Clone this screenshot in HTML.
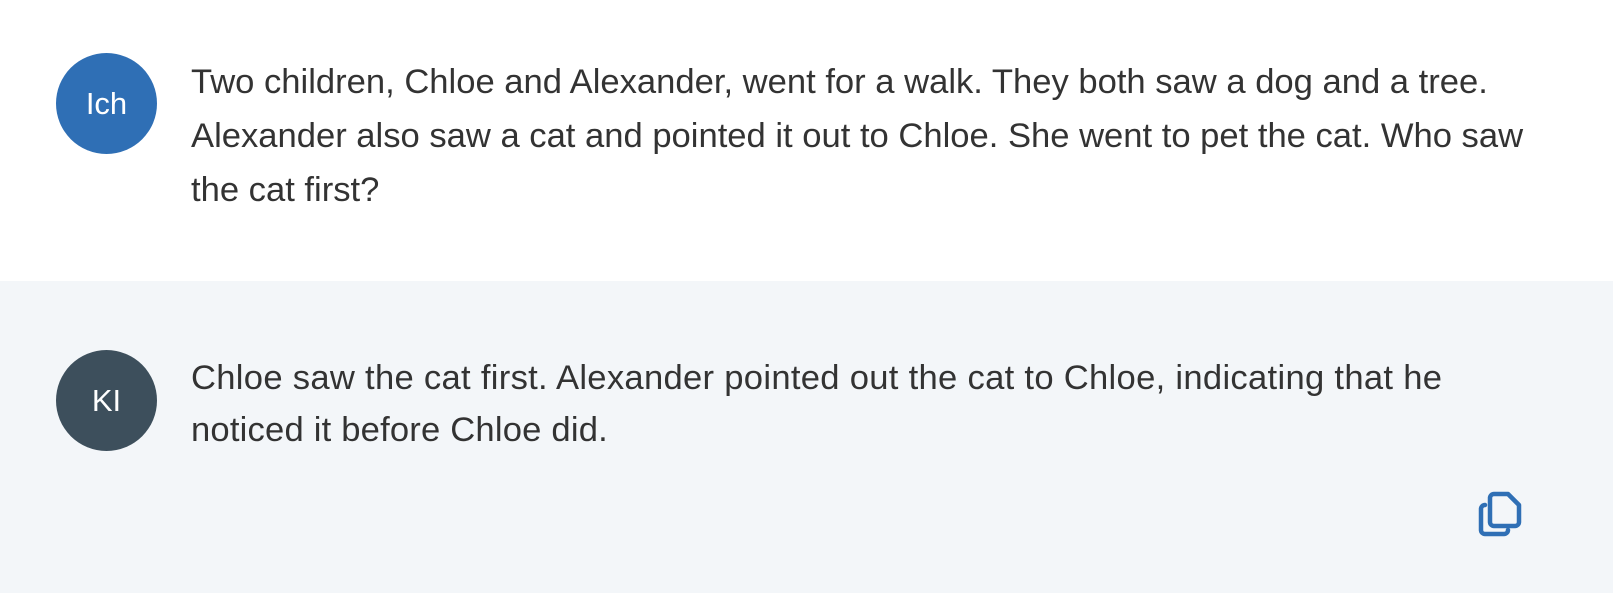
<!DOCTYPE html>
<html><head><style>
body{margin:0;width:1613px;height:593px;overflow:hidden;background:#fff;font-family:"Liberation Sans",sans-serif;position:relative}
.sec2{position:absolute;left:0;top:281px;width:1613px;height:312px;background:#f3f6f9}
.av{position:absolute;left:56px;width:101px;height:101px;border-radius:50%;color:#fff;font-size:31px;display:flex;align-items:center;justify-content:center}
.l{position:absolute;left:191px;font-size:34.6px;color:#333;white-space:nowrap;line-height:1}
</style></head><body>
<div class="av" style="top:53px;background:#2f6fb5">Ich</div>
<div class="l" style="top:65px">Two children, Chloe and Alexander, went for a walk. They both saw a dog and a tree.</div>
<div class="l" style="top:119px">Alexander also saw a cat and pointed it out to Chloe. She went to pet the cat. Who saw</div>
<div class="l" style="top:173px">the cat first?</div>
<div class="sec2"></div>
<div class="av" style="top:350px;background:#3d4f5c">KI</div>
<div class="l" style="top:361px;letter-spacing:0.3px">Chloe saw the cat first. Alexander pointed out the cat to Chloe, indicating that he</div>
<div class="l" style="top:413px;letter-spacing:0.2px">noticed it before Chloe did.</div>
<svg style="position:absolute;left:1478px;top:490px" width="46" height="48" viewBox="0 0 46 48" fill="none" stroke="#2f6fb5" stroke-width="4.5" stroke-linejoin="round" stroke-linecap="round">
<path d="M16 4h14l11 11v17a4 4 0 0 1-4 4H16a4 4 0 0 1-4-4V8a4 4 0 0 1 4-4z"/>
<path d="M7 15a4 4 0 0 0-4 4v21a4 4 0 0 0 4 4h19a4 4 0 0 0 4-4"/>
</svg>
</body></html>
